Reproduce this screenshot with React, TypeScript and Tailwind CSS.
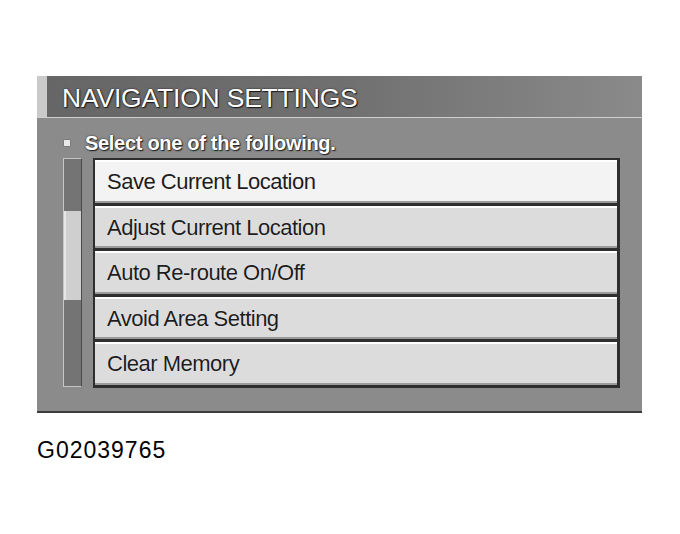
const items = [
  "Save Current Location",
  "Adjust Current Location",
  "Auto Re-route On/Off",
  "Avoid Area Setting",
  "Clear Memory",
];

export default function App() {
  return (
    <div className="w-[680px] h-[534px] bg-white font-['Liberation_Sans',Arial,sans-serif] pt-[76px] pl-[37px]">
      {/* nav screen */}
      <div className="w-[605px] h-[337px] flex flex-col bg-[#8b8b8b] border-b-2 border-[#3c3c3c]">
        {/* title bar */}
        <div className="flex h-[42px] border-b border-[#cfcfcf]">
          <div className="w-[10px] bg-[#cacaca]" />
          <div className="flex-1 flex items-center pl-[15px] pt-[3px] bg-gradient-to-r from-[#666] via-[#707070] to-[#8a8a8a]">
            <span className="text-[26.5px] leading-none text-white tracking-[-0.2px] [text-shadow:0_0_2px_#1a1a1a,1px_1px_1px_#1a1a1a]">
              NAVIGATION SETTINGS
            </span>
          </div>
        </div>

        {/* prompt */}
        <div className="flex items-center h-[40px] pl-[27px] pt-[9px]">
          <span className="w-[6px] h-[6px] bg-[#e8e8e8] shadow-[0_0_1px_#333]" />
          <span className="ml-[15px] text-[20px] font-bold text-white tracking-[-0.3px] [text-shadow:0_0_2px_#222,1px_1px_1px_#222]">
            Select one of the following.
          </span>
        </div>

        {/* scrollbar + list */}
        <div className="flex pl-[26px]">
          <div className="w-[19px] h-[229px] border border-[#c4c4c4] border-r-[#4a4a4a] bg-[#747474] pt-[52px]">
            <div className="h-[89px] bg-[#cfcfcf] border-l-2 border-[#e6e6e6]" />
          </div>
          <div className="ml-[11px] w-[527px] flex flex-col border-t-2 border-l-2 border-[#2e2e2e]">
            {items.map((label, i) => (
              <div
                key={label}
                className={`h-[45.5px] flex items-center pl-[12px] pt-[1px] border-r-[3px] border-b-[3px] border-[#2e2e2e] shadow-[inset_0_2px_0_#fff,inset_0_-2px_0_#9a9a9a] ${
                  i === 0 ? "bg-[#f3f3f3]" : "bg-[#dcdcdc]"
                }`}
              >
                <span className="text-[22px] text-[#1c1c1c] tracking-[-0.5px] [text-shadow:0_0_1px_#fff]">
                  {label}
                </span>
              </div>
            ))}
          </div>
        </div>
      </div>

      <div className="mt-[26px] text-[23px] leading-none text-black tracking-[1px]">G02039765</div>
    </div>
  );
}
